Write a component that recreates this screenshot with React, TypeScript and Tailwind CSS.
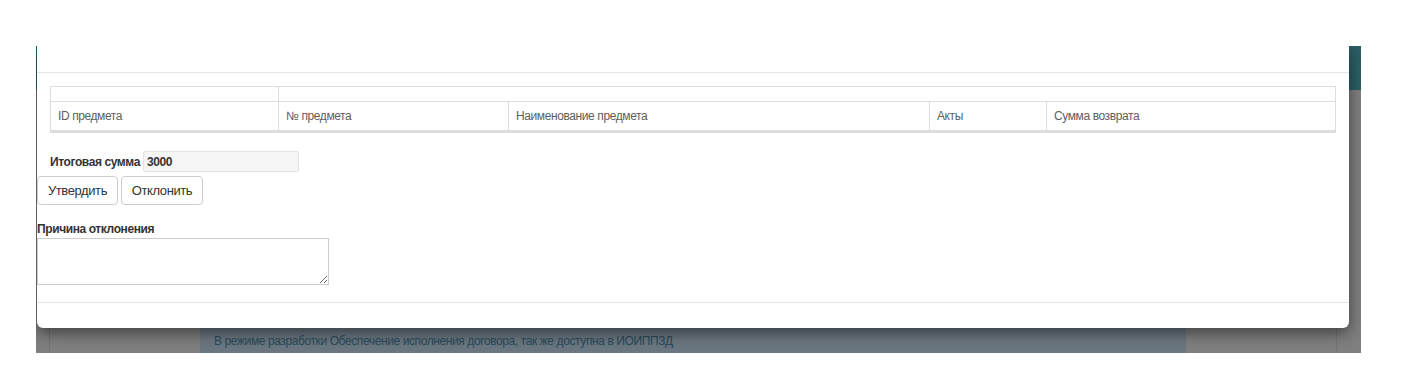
export default function App() {
  const cols = [
    { t: "ID предмета", w: "w-[228px]" },
    { t: "№ предмета", w: "w-[230px]" },
    { t: "Наименование предмета", w: "w-[421px]" },
    { t: "Акты", w: "w-[117px]" },
  ];
  return (
    <div className="w-[1407px] h-[366px] bg-white overflow-hidden font-['Liberation_Sans',Arial,sans-serif] tracking-[-0.4px]">
      <div className="relative overflow-hidden ml-[36px] mt-[46px] w-[1325px] h-[307px] bg-[#7f7f7f] flex flex-col">
        <div className="h-[44px] bg-[#2b5f66]" />
        <div className="flex-1 flex">
          <div className="w-[14px] border-r border-[#737373]" />
          <div className="flex-1 flex flex-col justify-end">
            <div className="flex h-[25px]">
              <div className="w-[150px]" />
              <div className="w-[986px] bg-[#6b7780] text-[12px] text-[#2a4a5c] pl-[14px] flex items-center">
                В режиме разработки Обеспечение исполнения договора, так же доступна в ИОИППЗД
              </div>
              <div className="w-[151px] border-r border-[#737373]" />
            </div>
          </div>
        </div>

        <div className="absolute left-[1px] top-0 w-[1312px] h-[282px] bg-white rounded-b-[6px] shadow-[0_5px_15px_rgba(0,0,0,0.5)] flex flex-col text-[#333]">
          <div className="h-[27px] shrink-0 border-b border-[#e5e5e5]" />
          <div className="mt-[13px] ml-[13px] w-[1286px] border border-[#ddd] text-[12px] text-[#5e5e5e]">
            <div className="flex h-[15px] border-b border-[#ddd]">
              <div className="w-[228px] border-r border-[#ddd]" />
              <div className="flex-1" />
            </div>
            <div className="flex h-[30px] border-b-2 border-[#ddd]">
              {cols.map((c) => (
                <div key={c.t} className={`${c.w} border-r border-[#ddd] pl-[7px] flex items-center`}>
                  {c.t}
                </div>
              ))}
              <div className="flex-1 pl-[7px] flex items-center">Сумма возврата</div>
            </div>
          </div>
          <div className="mt-[18px] ml-[13px] flex items-center h-[21px]">
            <span className="text-[12px] font-bold text-[#333]">Итоговая сумма</span>
            <div className="ml-[3px] w-[156px] h-[21px] bg-[#f5f5f5] border border-[#e3e3e3] rounded-[2px] text-[12px] font-bold pl-[3px] flex items-center">
              3000
            </div>
          </div>
          <div className="mt-[4px] flex gap-[3px]">
            <button className="w-[81px] h-[29px] bg-white border border-[#ccc] rounded-[4px] text-[13px] text-[#333]">
              Утвердить
            </button>
            <button className="w-[82px] h-[29px] bg-white border border-[#ccc] rounded-[4px] text-[13px] text-[#333]">
              Отклонить
            </button>
          </div>
          <div className="mt-[17px] h-[15px] text-[12px] font-bold leading-[15px]">Причина отклонения</div>
          <textarea className="mt-[1px] w-[292px] h-[47px] border border-[#ccc] block" />
          <div className="mt-[17px] border-t border-[#e5e5e5] flex-1" />
        </div>
      </div>
    </div>
  );
}
